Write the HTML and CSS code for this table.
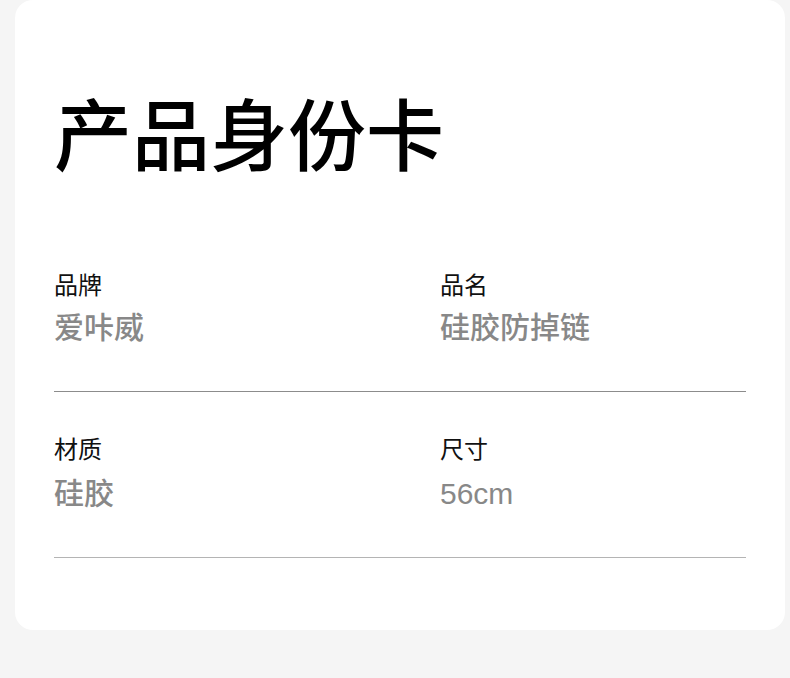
FILE: index.html
```html
<!DOCTYPE html>
<html lang="zh-CN">
<head>
  <meta charset="UTF-8">
  <meta name="viewport" content="width=device-width, initial-scale=1.0">
  <title>产品身份卡</title>
  <link rel="stylesheet" href="styles.css">
</head>
<body>

  <!-- 产品身份卡 -->
  <div class="card">
    <h1 class="card-title">产品身份卡</h1>

    <div class="spec-row">
      <div class="spec-item">
        <p class="spec-label">品牌</p>
        <p class="spec-value">爱咔威</p>
      </div>
      <div class="spec-item">
        <p class="spec-label">品名</p>
        <p class="spec-value">硅胶防掉链</p>
      </div>
    </div>

    <div class="spec-row spec-row-light">
      <div class="spec-item">
        <p class="spec-label">材质</p>
        <p class="spec-value">硅胶</p>
      </div>
      <div class="spec-item">
        <p class="spec-label">尺寸</p>
        <p class="spec-value">56cm</p>
      </div>
    </div>
  </div>

</body>
</html>
```

FILE: styles.css
```css
body, html {
  margin: 0;
  padding: 0;
  background-color: #f5f5f5;
  font-family: "Liberation Sans", "Noto Sans CJK SC", sans-serif;
  color: #111;
}

.card {
  width: 770px;
  height: 630px;
  box-sizing: border-box;
  margin-left: 15px;
  padding: 92px 39px 0 39px;
  background: #fff;
  border-radius: 18px;
}

.card-title {
  margin: 0 0 104px;
  font-size: 78px;
  line-height: 1;
  font-weight: 500;
  color: #000;
  font-family: "Noto Sans CJK SC", sans-serif;
}

.spec-row {
  display: grid;
  grid-template-columns: 386px 1fr;
  padding-bottom: 48px;
  border-bottom: 1px solid #8c8c8c;
  margin-bottom: 46px;
}

.spec-row-light {
  border-bottom-color: #b4b4b4;
  padding-bottom: 48px;
}

.spec-label {
  margin: 0 0 15px;
  font-size: 24px;
  line-height: 1;
  color: #111;
}

.spec-row-light .spec-label {
  margin-bottom: 17px;
}

.spec-value {
  margin: 0;
  font-size: 30px;
  line-height: 1;
  font-weight: 500;
  color: #888;
}
```
